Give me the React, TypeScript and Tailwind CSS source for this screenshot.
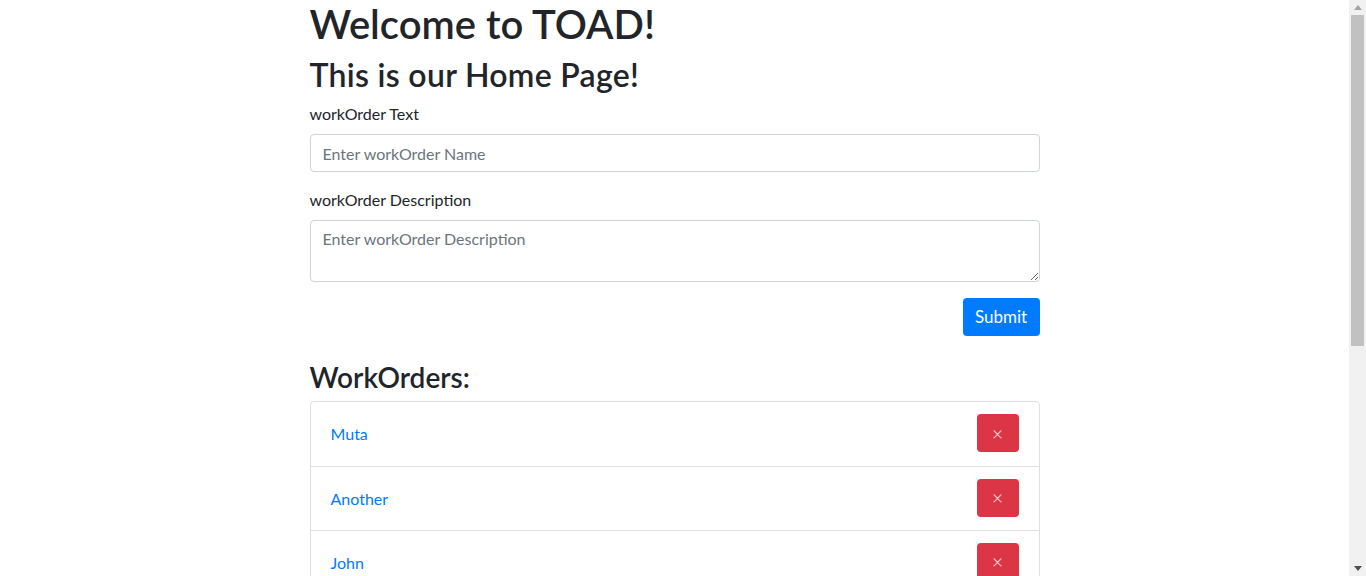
export default function App() {
  const workOrders = ["Muta", "Another", "John"];

  return (
    <div
      className="flex items-start bg-white text-[#212529]"
      style={{ fontFamily: 'Lato, "Open Sans", Arial, sans-serif' }}
    >
      <div className="flex-1 min-h-[946px]">
        <div className="w-[730px] mx-auto">
          <h1 className="text-[40px] leading-[48px] font-semibold mb-2">Welcome to TOAD!</h1>
          <h2 className="text-[32px] leading-[38px] font-semibold mb-2 tracking-[0.3px]">This is our Home Page!</h2>

          {/* Form */}
          <form onSubmit={(e) => e.preventDefault()}>
            <div className="mb-4">
              <label className="block text-base leading-6 mb-2">workOrder Text</label>
              <input
                type="text"
                placeholder="Enter workOrder Name"
                className="block w-full h-[38px] px-3 text-base border border-[#ced4da] rounded placeholder:text-[#6c757d] outline-none"
              />
            </div>
            <div className="mb-4">
              <label className="block text-base leading-6 mb-2">workOrder Description</label>
              <textarea
                rows={2}
                placeholder="Enter workOrder Description"
                className="block w-full h-[62px] px-3 py-1.5 text-base leading-6 border border-[#ced4da] rounded placeholder:text-[#6c757d] outline-none"
              />
            </div>
            <div className="flex justify-end">
              <button
                type="submit"
                className="h-[38px] w-[77px] text-[17px] text-white bg-[#007bff] rounded"
              >
                Submit
              </button>
            </div>
          </form>

          {/* List */}
          <h3 className="text-[28px] leading-[34px] font-semibold mt-6 mb-[7px]">WorkOrders:</h3>
          <ul className="border border-[#dfdfdf] rounded">
            {workOrders.map((name, i) => (
              <li
                key={name}
                className={`h-[64px] flex items-center justify-between px-5 ${i > 0 ? "border-t border-[#dfdfdf]" : ""}`}
              >
                <a href="#" className="text-base text-[#007bff]">
                  {name}
                </a>
                <button className="w-[42px] h-[38px] -mt-0.5 rounded bg-[#dc3545] text-white/90 text-[19px] font-light leading-none">
                  ×
                </button>
              </li>
            ))}
          </ul>
        </div>
      </div>

      {/* Window scrollbar */}
      <div className="sticky top-0 w-[17px] h-screen bg-[#f1f1f1] flex flex-col items-center">
        <div className="h-[15px] flex items-center justify-center">
          <svg width="8" height="5" viewBox="0 0 8 5">
            <path d="M0 5 L4 0 L8 5 Z" fill="#a3a3a3" />
          </svg>
        </div>
        <div className="w-[13px] h-[331px] bg-[#c1c1c1]" />
        <div className="flex-1" />
        <div className="h-[15px] flex items-center justify-center">
          <svg width="8" height="5" viewBox="0 0 8 5">
            <path d="M0 0 L8 0 L4 5 Z" fill="#505050" />
          </svg>
        </div>
      </div>
    </div>
  );
}
